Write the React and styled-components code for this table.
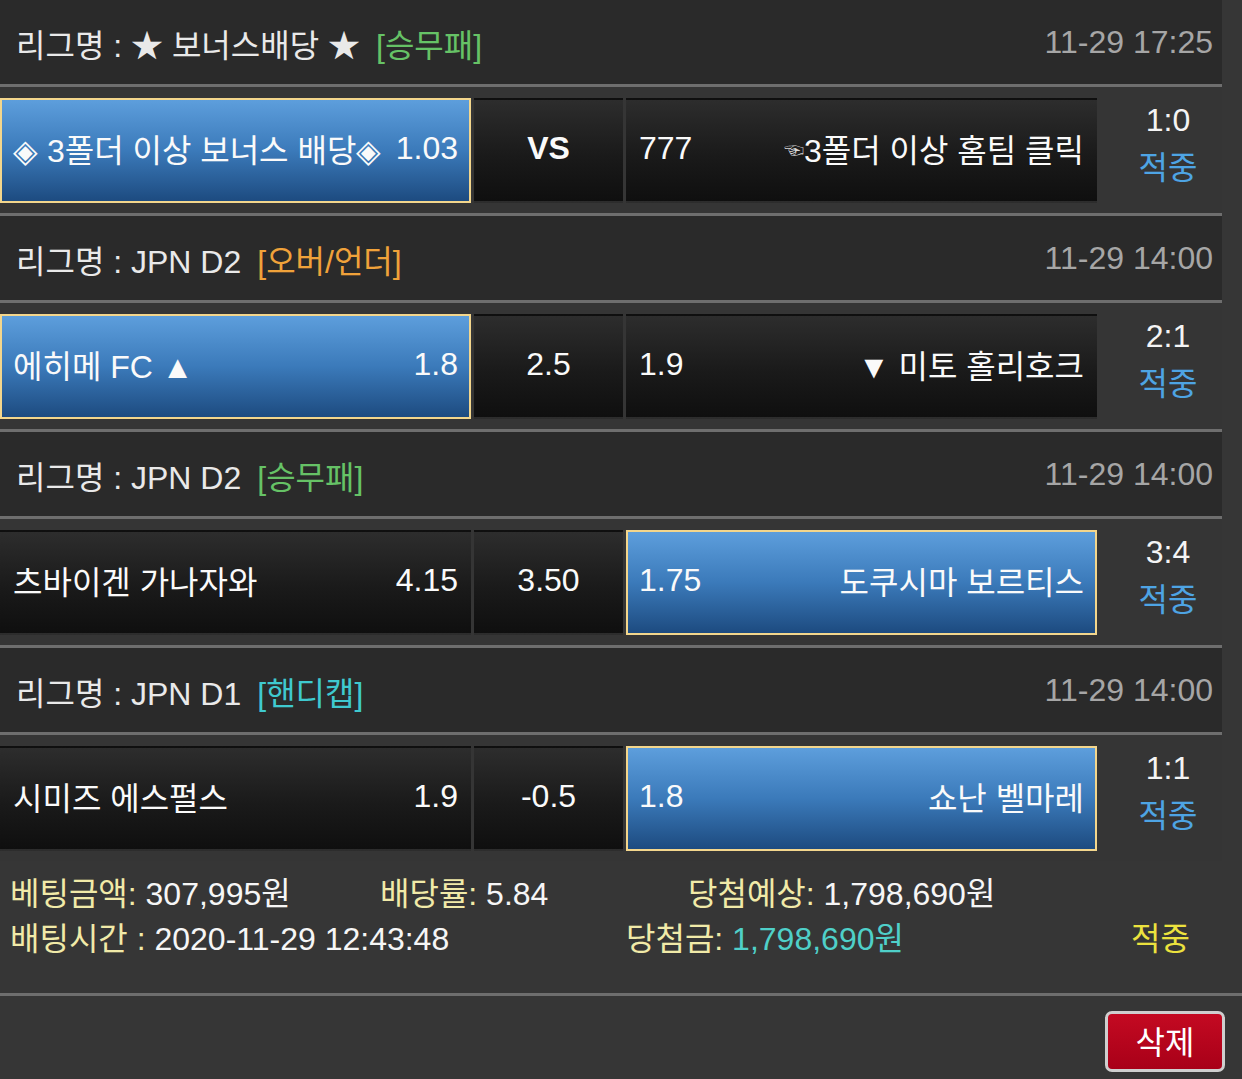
import React from "react";
import styled, { createGlobalStyle } from "styled-components";

const GlobalStyle = createGlobalStyle`
  html, body {
    margin: 0;
    padding: 0;
    background: #363636;
  }
  body {
    font-family: "Liberation Sans", "Noto Sans CJK KR", sans-serif;
    font-size: 32px;
    color: #f2f2f2;
  }
`;

const Page = styled.div`
  width: 1242px;
  min-height: 1079px;
  background: #363636;
`;

const List = styled.div`
  width: 1222px;
`;

const Header = styled.div`
  height: 84px;
  background: #2a2a2a;
  display: flex;
  align-items: center;
  justify-content: space-between;
  padding: 1px 9px 0 16px;
  box-sizing: border-box;
`;

const League = styled.div`
  color: #e9e9e9;
  display: flex;
  align-items: center;
  gap: 16px;
`;

const BetType = styled.span`
  color: ${(p) => p.$color};
`;

const Time = styled.div`
  color: #a6a6a6;
`;

const Divider = styled.div`
  height: 3px;
  background: #6e6e6e;
`;

const OddsRow = styled.div`
  height: 126px;
  box-sizing: border-box;
  padding: 11px 0 10px;
  background: #353535;
  display: grid;
  grid-template-columns: 471px 149px 471px 1fr;
  column-gap: 3px;
`;

const Cell = styled.div`
  box-sizing: border-box;
  display: flex;
  align-items: center;
  justify-content: ${(p) => (p.$center ? "center" : "space-between")};
  padding: 0 11px 5px 11px;
  color: #fafafa;
  white-space: nowrap;
  background: ${(p) =>
    p.$selected
      ? "linear-gradient(#5d9edc, #3b7aba 50%, #1d4b80)"
      : "linear-gradient(#2d2d2d, #1a1a1a 55%, #0f0f0f)"};
  border: 2px solid ${(p) => (p.$selected ? "#f3d68c" : "transparent")};
  font-weight: ${(p) => (p.$bold ? 700 : 400)};
`;

const Hand = styled.span`
  font-size: 20px;
  color: #d8d8d8;
  vertical-align: 4px;
`;

const Score = styled.div`
  display: flex;
  flex-direction: column;
  align-items: center;
  justify-content: flex-start;
  padding-left: 14px;
  margin-top: -1px;
  line-height: 46px;
`;

const ScoreValue = styled.span`
  color: #f4f4f4;
`;

const Result = styled.span`
  color: #4ea4e4;
  margin-top: 2px;
`;

const Summary = styled.div`
  padding: 11px 0 31px 10px;
  line-height: 45px;
`;

const SummaryLine = styled.div`
  display: flex;
  white-space: nowrap;
`;

const Item = styled.div`
  width: ${(p) => p.$w}px;
  flex: none;
`;

const Label = styled.span`
  color: #f1eaa8;
`;

const Value = styled.span`
  color: ${(p) => p.$color || "#f6f6f6"};
`;

const Footer = styled.div`
  display: flex;
  justify-content: flex-end;
  padding: 15px 17px 0 0;
`;

const DeleteButton = styled.button`
  width: 120px;
  height: 61px;
  box-sizing: border-box;
  border: 3px solid #cfcfcf;
  border-radius: 7px;
  background: linear-gradient(#c40a22, #a80018);
  color: #ffffff;
  font-family: "Liberation Sans", "Noto Sans CJK KR", sans-serif;
  font-size: 32px;
  padding: 0 0 3px;
  cursor: pointer;
`;

const matches = [
  {
    league: "리그명 : ★ 보너스배당 ★",
    type: "[승무패]",
    typeColor: "#66c266",
    time: "11-29 17:25",
    home: "◈ 3폴더 이상 보너스 배당◈",
    homeOdds: "1.03",
    mid: "VS",
    bold: true,
    away: (
      <span>
        <Hand>☜</Hand>3폴더 이상 홈팀 클릭
      </span>
    ),
    awayOdds: "777",
    pick: "home",
    score: "1:0",
  },
  {
    league: "리그명 : JPN D2",
    type: "[오버/언더]",
    typeColor: "#f0a23a",
    time: "11-29 14:00",
    home: "에히메 FC ▲",
    homeOdds: "1.8",
    mid: "2.5",
    away: "▼ 미토 홀리호크",
    awayOdds: "1.9",
    pick: "home",
    score: "2:1",
  },
  {
    league: "리그명 : JPN D2",
    type: "[승무패]",
    typeColor: "#66c266",
    time: "11-29 14:00",
    home: "츠바이겐 가나자와",
    homeOdds: "4.15",
    mid: "3.50",
    away: "도쿠시마 보르티스",
    awayOdds: "1.75",
    pick: "away",
    score: "3:4",
  },
  {
    league: "리그명 : JPN D1",
    type: "[핸디캡]",
    typeColor: "#3fc9cf",
    time: "11-29 14:00",
    home: "시미즈 에스펄스",
    homeOdds: "1.9",
    mid: "-0.5",
    away: "쇼난 벨마레",
    awayOdds: "1.8",
    pick: "away",
    score: "1:1",
  },
];

export default function App() {
  return (
    <Page>
      <GlobalStyle />
      <List>
        {matches.map((m, i) => (
          <React.Fragment key={i}>
            <Header>
              <League>
                <span>{m.league}</span>
                <BetType $color={m.typeColor}>{m.type}</BetType>
              </League>
              <Time>{m.time}</Time>
            </Header>
            <Divider />
            <OddsRow>
              <Cell $selected={m.pick === "home"}>
                <span>{m.home}</span>
                <span>{m.homeOdds}</span>
              </Cell>
              <Cell $center $bold={m.bold}>
                {m.mid}
              </Cell>
              <Cell $selected={m.pick === "away"}>
                <span>{m.awayOdds}</span>
                <span>{m.away}</span>
              </Cell>
              <Score>
                <ScoreValue>{m.score}</ScoreValue>
                <Result>적중</Result>
              </Score>
            </OddsRow>
            {i < matches.length - 1 && <Divider />}
          </React.Fragment>
        ))}
      </List>
      <Summary>
        <SummaryLine>
          <Item $w={370}>
            <Label>베팅금액:</Label> <Value>307,995원</Value>
          </Item>
          <Item $w={308}>
            <Label>배당률:</Label> <Value>5.84</Value>
          </Item>
          <Item $w={400}>
            <Label>당첨예상:</Label> <Value>1,798,690원</Value>
          </Item>
        </SummaryLine>
        <SummaryLine>
          <Item $w={616}>
            <Label>배팅시간 :</Label> <Value>2020-11-29 12:43:48</Value>
          </Item>
          <Item $w={505}>
            <Label>당첨금:</Label> <Value $color="#4fd0c9">1,798,690원</Value>
          </Item>
          <Item $w={100}>
            <Value $color="#ece23e">적중</Value>
          </Item>
        </SummaryLine>
      </Summary>
      <Divider />
      <Footer>
        <DeleteButton>삭제</DeleteButton>
      </Footer>
    </Page>
  );
}
